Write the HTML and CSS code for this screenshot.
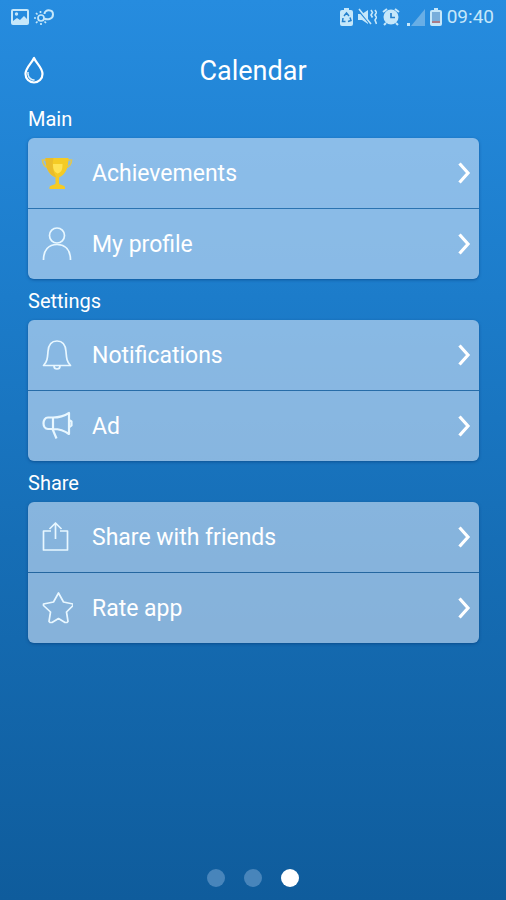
FILE: index.html
```html
<!DOCTYPE html>
<html lang="en">
<head>
<meta charset="utf-8">
<meta name="viewport" content="width=device-width, initial-scale=1">
<title>Calendar</title>
<link rel="stylesheet" href="styles.css">
</head>
<body>
<svg class="defs" aria-hidden="true">
  <symbol id="chevron" viewBox="0 0 14 24"><path d="M2.500 2.500 11 12 2.500 21.500" fill="none" stroke="#fff" stroke-width="3.200"/></symbol>
</svg>
<div class="status">
  <div class="status-group">
    <svg width="18" height="16" viewBox="0 0 18 16"><path fill="#c5e7fa" fill-rule="evenodd" d="M2 0h14a2 2 0 0 1 2 2v12a2 2 0 0 1-2 2H2a2 2 0 0 1-2-2V2a2 2 0 0 1 2-2zm0 2v10l4-3 3 2 4-4 3 3V2z"/><circle cx="5.500" cy="5" r="1.700" fill="#c5e7fa"/></svg>
    <svg width="20" height="16" viewBox="0 0 20 16" fill="none" stroke="#c5e7fa" stroke-width="1.700"><circle cx="7" cy="9" r="3"/><path d="M6.500 2v2M2 4l1.500 1.500M0 9h2M2 14l1.500-1.500M7 16v-2M12 14l-1.500-1.500"/><path stroke-width="2" d="M10 9.500c3 1.500 9 1 9-4 0-5.500-8.500-5.500-8.500-.500"/></svg>
  </div>
  <div class="status-group">
    <svg width="13" height="18" viewBox="0 0 13 18"><path fill="#c5e7fa" d="M4 0h5v2h2a2 2 0 0 1 2 2v12a2 2 0 0 1-2 2H2a2 2 0 0 1-2-2V4a2 2 0 0 1 2-2h2z"/><path d="M4 8l2.500-3L9 8M10 9.500l1 3-3 1M5.500 13.500H2.500L3 10" fill="none" stroke="#2681cd" stroke-width="1.500"/></svg>
    <svg width="19" height="18" viewBox="0 0 19 18" fill="none"><path fill="#c5e7fa" d="M0 6h4l6-4v14l-6-4H0z"/><path d="M0 2l12 14" stroke="#2488da" stroke-width="1.500"/><path d="M1 1l12 15M13 2l1.500 2.500L13 7l1.500 2.500M17 2l1.500 2.500L17 7l1.500 2.500L17 12l1.500 4" stroke="#c5e7fa" stroke-width="1.600"/></svg>
    <svg width="18" height="18" viewBox="0 0 18 18"><circle cx="9" cy="9" r="7.500" fill="#c5e7fa"/><path d="M1 4l4-3M17 4l-4-3M4 15l-2 2M14 15l2 2" stroke="#c5e7fa" stroke-width="2"/><path d="M9 5v4.500h4" fill="none" stroke="#2681cd" stroke-width="1.700"/></svg>
    <svg class="signal" width="18" height="17" viewBox="0 0 18 17"><path d="M18 0v17H4z" fill="#68aee6"/><path d="M0 14h3v3H0z" fill="#c5e7fa"/></svg>
    <svg width="12" height="18" viewBox="0 0 12 18"><path fill="#c5e7fa" d="M4 0h4v2h2a2 2 0 0 1 2 2v12a2 2 0 0 1-2 2H2a2 2 0 0 1-2-2V4a2 2 0 0 1 2-2h2z"/><path fill="#78aedb" d="M2 4h8v9H2z"/><path fill="#aa7c89" d="M2 13h8v2H2z"/></svg>
    <time class="clock">09:40</time>
  </div>
</div>
<header class="header">
  <button class="drop" type="button" aria-label="Water">
    <svg width="20" height="28" viewBox="0 0 20 28"><path d="M10 2C8 7 1.500 11.500 1.500 18a8.500 8.500 0 0 0 17 0C18.500 11.500 12 7 10 2z" fill="none" stroke="#fff" stroke-width="2.200" stroke-linejoin="round"/><path d="M4 16c0 5 3 7.500 6.500 8-4 1-7.500-3-6.500-8z" fill="#e2f4ff" stroke="#e2f4ff"/></svg>
  </button>
  <h1 class="title">Calendar</h1>
</header>
<main class="menu">
  <section>
    <h2 class="label">Main</h2>
    <nav class="card" aria-label="Main">
      <a class="row" href="#achievements"><svg class="icon" viewBox="0 0 32 36"><path d="M7 5H1.500c0 4 2.500 7 7 8M25 5h5.500c0 4-2.500 7-7 8" fill="none" stroke="#dcc658" stroke-width="1.700"/><path d="M4.500 3h23c0 10-3 17-9.500 19.500v6c1 1.500 5 1.500 6 3.500v2H8.500v-2c1-2 5-2 6-3.500v-6C7.500 20 4.500 13 4.500 3z" fill="#f5cb25"/><path d="M4.500 3h8c-1.500 7-1 13 3 19.500C8 20 4.500 13 4.500 3z" fill="#e9bc2c"/><path d="M12 9h9.500c0 6-1 8-5 9.500C13 17 12 14 12 9z" fill="#ffe354"/></svg><span class="text">Achievements</span><svg class="chevron"><use href="#chevron"/></svg></a>
      <a class="row" href="#profile"><svg class="icon" viewBox="0 0 32 36"><g class="line"><circle cx="16" cy="9.500" r="7.500"/><path d="M2.500 34c0-10 5-15.500 13.500-15.500s13.500 5.500 13.500 15.500"/></g></svg><span class="text">My profile</span><svg class="chevron"><use href="#chevron"/></svg></a>
    </nav>
  </section>
  <section>
    <h2 class="label">Settings</h2>
    <nav class="card" aria-label="Settings">
      <a class="row" href="#notifications"><svg class="icon" viewBox="0 0 32 36"><g class="line"><path d="M2.500 28.500h27c-4-4-4-8-4.500-14C24.500 7 21 4 16 4S7.500 7 7 14.500c-.500 6-.500 10-4.500 14zM13 29c0 4 6 4 6 0"/></g></svg><span class="text">Notifications</span><svg class="chevron"><use href="#chevron"/></svg></a>
      <a class="row" href="#ad"><svg class="icon" viewBox="0 0 32 36"><g class="line bold"><path d="M12 9.500H7c-6 0-6 11.500 0 11.500h5zM12 9.500c6 0 12-2 16-4.500v21c-4-3-10-5-16-5M11.500 21l4 9.500M28 12l2.500 1.500v4L28 19.500"/></g></svg><span class="text">Ad</span><svg class="chevron"><use href="#chevron"/></svg></a>
    </nav>
  </section>
  <section>
    <h2 class="label">Share</h2>
    <nav class="card" aria-label="Share">
      <a class="row" href="#share"><svg class="icon" viewBox="0 0 32 36"><g class="line"><path d="M10 12H2.500v19h24v-19H19M14.500 20V4M8.500 10l6-6 6 6"/></g></svg><span class="text">Share with friends</span><svg class="chevron"><use href="#chevron"/></svg></a>
      <a class="row" href="#rate"><svg class="icon" viewBox="0 0 32 36"><g class="line"><path d="M17.500 3l5 9 9.500 2v1.500L25.500 22l1.500 9.500-1 1h-2l-6.500-4-6.500 4H9l-1-1L9.500 22 2.500 15.500V14l10-2z"/></g></svg><span class="text">Rate app</span><svg class="chevron"><use href="#chevron"/></svg></a>
    </nav>
  </section>
</main>
<footer class="pager">
  <span class="dot"></span><span class="dot"></span><span class="dot active"></span>
</footer>
</body>
</html>
```
FILE: styles.css
```css
* {
  box-sizing: border-box;
}

body {
  margin: 0;
  min-height: 100vh;
  display: flex;
  flex-direction: column;
  background: linear-gradient(#268cdf, #1c7cca 33%, #166eb6 60%, #0f5c9c);
  color: #fff;
  font-family: Roboto, sans-serif;
}

svg {
  display: block;
  flex: none;
}

.defs {
  position: absolute;
  width: 0;
  height: 0;
}

.status {
  display: flex;
  justify-content: space-between;
  align-items: center;
  height: 34px;
  padding: 0 12px 0 11px;
}

.status-group {
  display: flex;
  align-items: center;
  gap: 5px;
}

.signal {
  margin-left: 2px;
}

.clock {
  color: #c5e7fa;
  font-size: 19px;
  line-height: 24px;
}

.header {
  display: grid;
  grid-template-columns: 48px 1fr 48px;
  align-items: center;
  padding: 12px 10px 0;
}

.drop {
  display: grid;
  place-items: center;
  height: 48px;
  padding: 0;
  border: 0;
  background: none;
}

.title {
  margin: 0;
  padding-top: 2px;
  text-align: center;
  font-size: 27px;
  line-height: 34px;
  font-weight: 400;
}

.menu {
  flex: 1;
  padding: 3px 27px 0 28px;
}

.label {
  margin: 0;
  padding: 10px 0 6px;
  font-size: 20px;
  line-height: 25px;
  font-weight: 400;
}

.card {
  overflow: hidden;
  border-radius: 6px;
  box-shadow: 0 1px 3px rgb(0 50 110 / 50%);
}

.row {
  display: flex;
  align-items: center;
  height: 70px;
  padding: 0 8px 0 13px;
  background: rgb(210 226 246 / 60%);
  background-clip: padding-box;
  color: #fff;
  text-decoration: none;
}

.row + .row {
  height: 71px;
  border-top: 1px solid rgb(60 95 130 / 40%);
}

.icon {
  width: 32px;
  height: 36px;
}

.line {
  fill: none;
  stroke: #e8f7ff;
  stroke-width: 1.7px;
  stroke-linejoin: round;
}

.bold {
  stroke-width: 2.2px;
}

.text {
  flex: 1;
  margin-left: 19px;
  padding-top: 2px;
  font-size: 23px;
  line-height: 30px;
}

.chevron {
  width: 14px;
  height: 24px;
}

.pager {
  display: flex;
  justify-content: center;
  gap: 19px;
  padding-bottom: 13px;
}

.dot {
  width: 18px;
  height: 18px;
  border-radius: 50%;
  background: #4885bb;
}

.active {
  background: #fff;
}
```
